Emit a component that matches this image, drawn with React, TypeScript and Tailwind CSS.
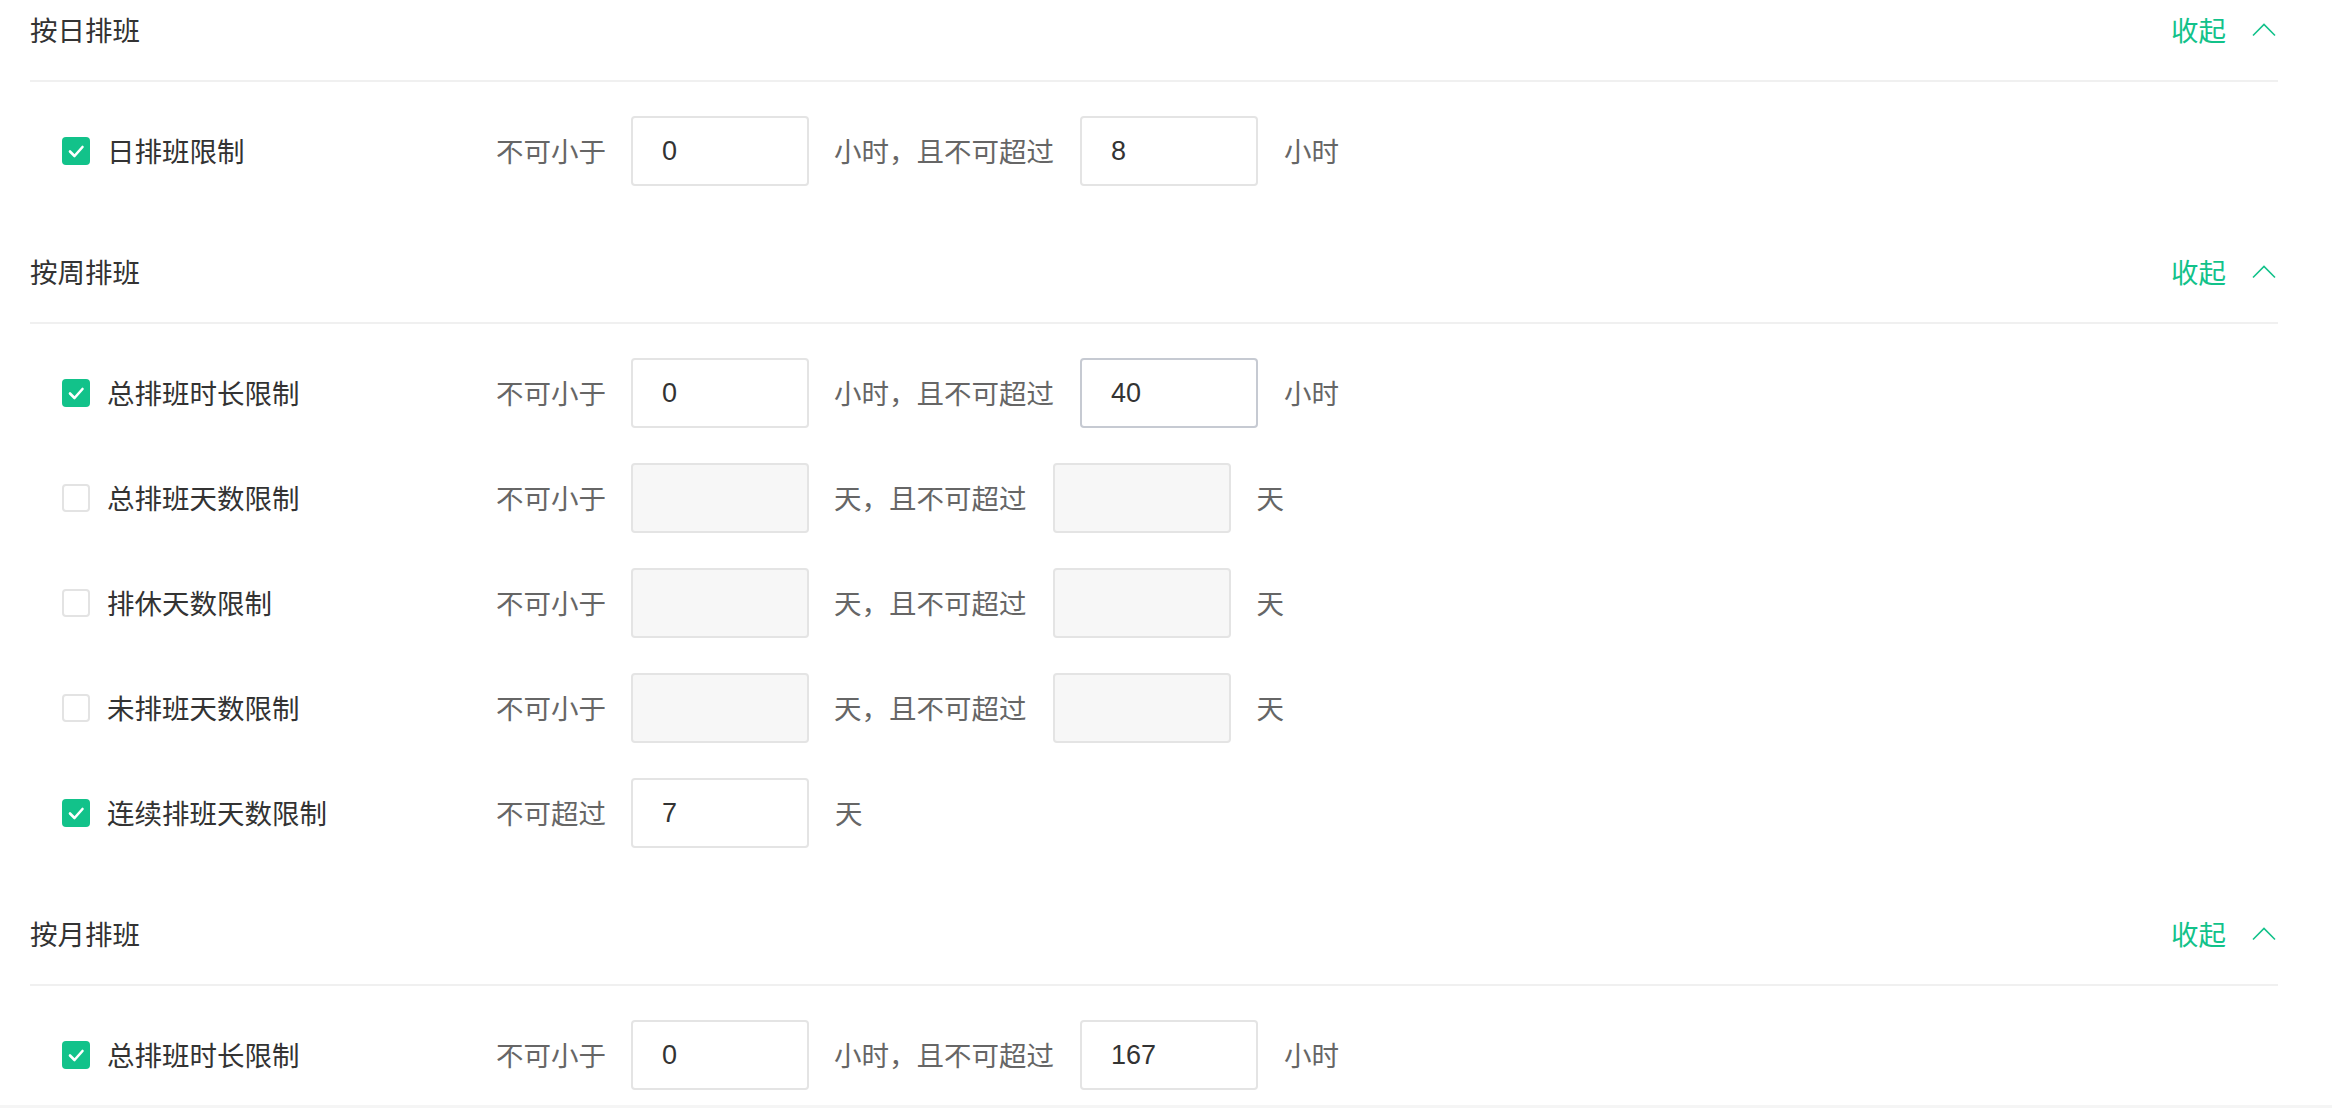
const font = "font-['Noto_Sans_CJK_SC','Noto_Sans',sans-serif]";

type Row = {
  label: string;
  checked: boolean;
  prefix: string;
  min?: string;
  mid?: string;
  max: string;
  unit: string;
  focus?: boolean;
};

type Section = { title: string; rows: Row[] };

const sections: Section[] = [
  {
    title: "按日排班",
    rows: [
      { label: "日排班限制", checked: true, prefix: "不可小于", min: "0", mid: "小时，且不可超过", max: "8", unit: "小时" },
    ],
  },
  {
    title: "按周排班",
    rows: [
      { label: "总排班时长限制", checked: true, prefix: "不可小于", min: "0", mid: "小时，且不可超过", max: "40", unit: "小时", focus: true },
      { label: "总排班天数限制", checked: false, prefix: "不可小于", min: "", mid: "天，且不可超过", max: "", unit: "天" },
      { label: "排休天数限制", checked: false, prefix: "不可小于", min: "", mid: "天，且不可超过", max: "", unit: "天" },
      { label: "未排班天数限制", checked: false, prefix: "不可小于", min: "", mid: "天，且不可超过", max: "", unit: "天" },
      { label: "连续排班天数限制", checked: true, prefix: "不可超过", max: "7", unit: "天" },
    ],
  },
  {
    title: "按月排班",
    rows: [
      { label: "总排班时长限制", checked: true, prefix: "不可小于", min: "0", mid: "小时，且不可超过", max: "167", unit: "小时" },
    ],
  },
];

function Checkbox({ checked }: { checked: boolean }) {
  if (checked) {
    return (
      <span className="flex h-[28px] w-[28px] shrink-0 items-center justify-center rounded-[4px] bg-[#12c28a]">
        <svg width="28" height="28" viewBox="0 0 28 28" fill="none">
          <polyline points="8,14.5 12.5,19 20.5,10" stroke="white" strokeWidth="2.6" strokeLinecap="round" strokeLinejoin="round" />
        </svg>
      </span>
    );
  }
  return <span className="h-[28px] w-[28px] shrink-0 rounded-[4px] border-2 border-[#e3e3e3] bg-white" />;
}

function Box({ value, enabled, focus }: { value: string; enabled: boolean; focus?: boolean }) {
  return (
    <input
      readOnly
      disabled={!enabled}
      value={value}
      className={`h-[70px] w-[178px] shrink-0 rounded-[4px] border-2 px-[29px] font-['Liberation_Sans',Arial,sans-serif] text-[27px] text-[#333] outline-none ${
        enabled ? "bg-white" : "bg-[#f7f7f7]"
      } ${focus ? "border-[#c6cad2]" : "border-[#e4e4e4]"}`}
    />
  );
}

function LimitRow({ row }: { row: Row }) {
  const enabled = row.checked;
  return (
    <div className="flex h-[70px] items-center pl-[32px]">
      <div className="flex w-[434px] items-center gap-[17px]">
        <Checkbox checked={row.checked} />
        <span className="text-[#333]">{row.label}</span>
      </div>
      <span className="text-[#666]">{row.prefix}</span>
      {row.min !== undefined && (
        <>
          <div className="ml-[25px]">
            <Box value={row.min} enabled={enabled} />
          </div>
          <span className="ml-[25px] text-[#666]">{row.mid}</span>
          <div className="ml-[26px]">
            <Box value={row.max} enabled={enabled} focus={row.focus} />
          </div>
        </>
      )}
      {row.min === undefined && (
        <div className="ml-[25px]">
          <Box value={row.max} enabled={enabled} />
        </div>
      )}
      <span className="ml-[26px] text-[#666]">{row.unit}</span>
    </div>
  );
}

export default function App() {
  return (
    <div className={`${font} min-h-[1108px] bg-[#f5f5f5] text-[27.5px]`}>
      <div className="bg-white pb-[15px]">
        <div className="ml-[30px] w-[2248px]">
          {sections.map((s, i) => (
            <section key={s.title} className={i > 0 ? "mt-[56px]" : ""}>
              {/* header */}
              <div className="flex h-[60px] items-center justify-between">
                <span className="text-[#333]">{s.title}</span>
                <button className="flex items-center gap-[26px] pr-[2px] text-[#12c28a]">
                  <span>收起</span>
                  <svg width="24" height="14" viewBox="0 0 24 14" fill="none">
                    <polyline points="1,12.5 12,1.5 23,12.5" stroke="#12c28a" strokeWidth="1.6" />
                  </svg>
                </button>
              </div>
              <div className="mt-[20px] h-[2px] bg-[#f0f0f0]" />

              <div className="mt-[34px] flex flex-col gap-[35px]">
                {s.rows.map((r) => (
                  <LimitRow key={r.label} row={r} />
                ))}
              </div>
            </section>
          ))}
        </div>
      </div>
    </div>
  );
}
